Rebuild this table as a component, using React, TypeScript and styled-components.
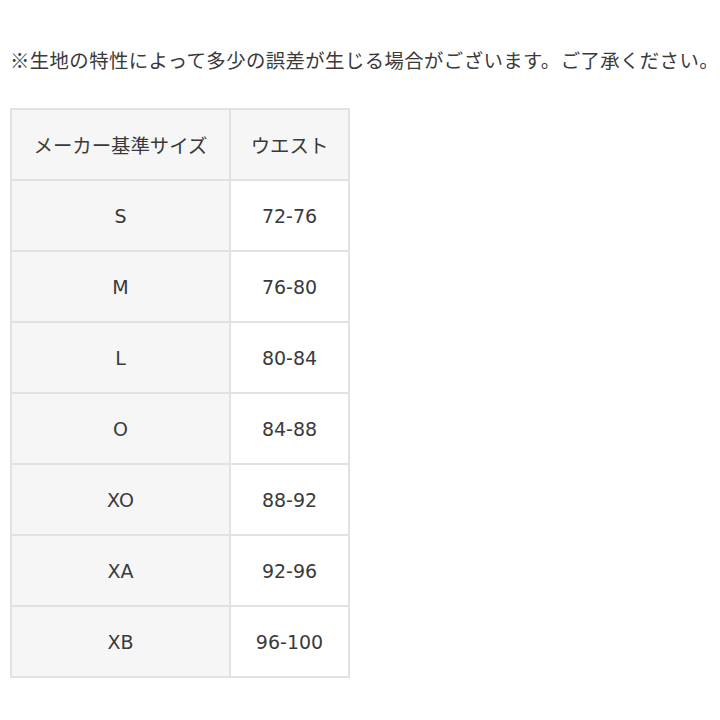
import styled, { createGlobalStyle } from 'styled-components';

const GlobalStyle = createGlobalStyle`
  body {
    margin: 0;
    background: #fff;
    font-family: "DejaVu Sans", "Noto Sans CJK JP", sans-serif;
    color: #333;
  }
`;

const rows = [
  ['S', '72-76'],
  ['M', '76-80'],
  ['L', '80-84'],
  ['O', '84-88'],
  ['XO', '88-92'],
  ['XA', '92-96'],
  ['XB', '96-100'],
];

export default function App() {
  return (
    <Page>
      <GlobalStyle />
      <Note>※生地の特性によって多少の誤差が生じる場合がございます。ご了承ください。</Note>
      <SizeTable>
        <thead>
          <tr>
            <HeadCell $wide>メーカー基準サイズ</HeadCell>
            <HeadCell>ウエスト</HeadCell>
          </tr>
        </thead>
        <tbody>
          {rows.map(([size, waist]) => (
            <tr key={size}>
              <Cell $shaded>{size}</Cell>
              <Cell>{waist}</Cell>
            </tr>
          ))}
        </tbody>
      </SizeTable>
    </Page>
  );
}

const Page = styled.div`
  padding: 46px 0 0 10px;
`;

const Note = styled.p`
  margin: 0 0 34px;
  font-family: "Noto Sans CJK JP", sans-serif;
  font-size: 19.4px;
  line-height: 28px;
  letter-spacing: 0.4px;
  white-space: nowrap;
  color: #3a3a3a;
`;

const SizeTable = styled.table`
  border-collapse: collapse;
  width: 340px;
  table-layout: fixed;
  border: 2px solid #e2e2e2;
`;

const HeadCell = styled.th<{ $wide?: boolean }>`
  width: ${(p) => (p.$wide ? '219px' : 'auto')};
  height: 71px;
  padding: 0;
  box-sizing: border-box;
  border: 2px solid #e2e2e2;
  background: #f6f6f6;
  font-family: "Noto Sans CJK JP", sans-serif;
  font-weight: normal;
  font-size: 19.4px;
  color: #3a3a3a;
  text-align: center;
  vertical-align: middle;
`;

const Cell = styled.td<{ $shaded?: boolean }>`
  height: 71px;
  padding: 0;
  box-sizing: border-box;
  border: 2px solid #e2e2e2;
  background: ${(p) => (p.$shaded ? '#f6f6f6' : '#fff')};
  font-size: 19px;
  color: #3a3a3a;
  text-align: center;
  vertical-align: middle;
`;
